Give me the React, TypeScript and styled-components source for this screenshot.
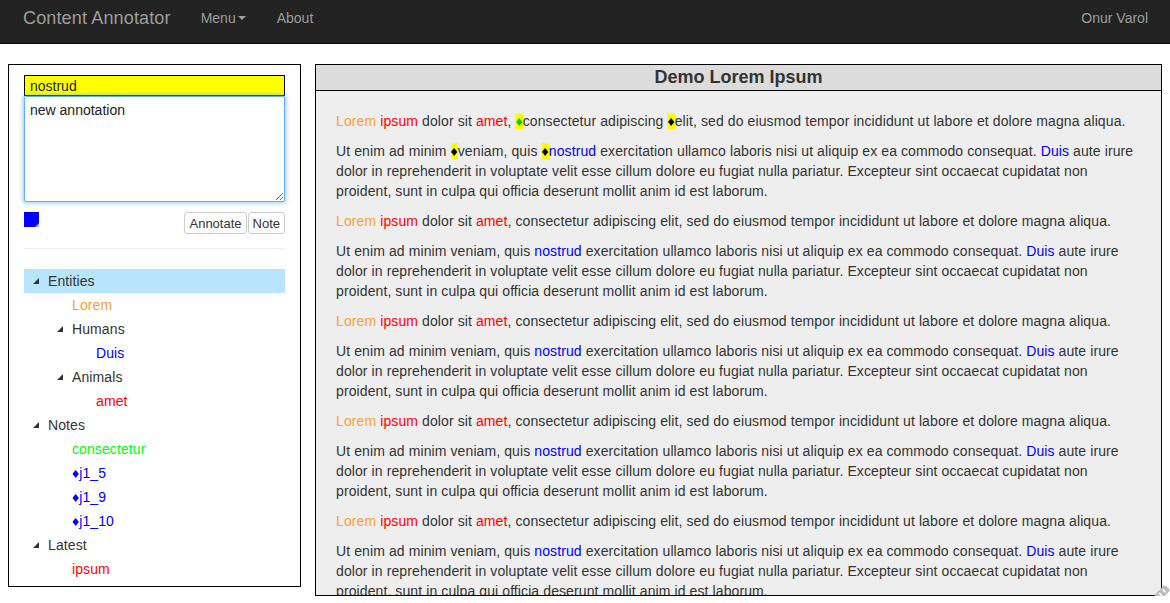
import React from 'react';
import styled, { createGlobalStyle } from 'styled-components';

const GlobalStyle = createGlobalStyle`
  body {
    margin: 0;
    font-family: 'Liberation Sans', Arial, sans-serif;
    font-size: 14px;
    line-height: 20px;
    color: #333;
    background: #fff;
  }
`;

const Navbar = styled.nav`
  height: 43px;
  box-sizing: content-box;
  background-color: #222;
  border-bottom: 1px solid #080808;
  display: flex;
  align-items: center;
  padding: 0 22px 0 23px;
  color: #9d9d9d;
`;

const NavInner = styled.div`
  display: flex;
  align-items: center;
  width: 100%;
  margin-top: -7px;
`;

const Brand = styled.div`
  font-size: 18px;
  margin-right: 30px;
  letter-spacing: 0.15px;
`;

const NavLink = styled.div<{ $last?: boolean }>`
  font-size: 14px;
  margin-right: ${(p) => (p.$last ? 0 : 31)}px;
  display: flex;
  align-items: center;
`;

const Caret = styled.span`
  display: inline-block;
  width: 0;
  height: 0;
  margin-left: 2px;
  border-top: 4px solid #9d9d9d;
  border-left: 4px solid transparent;
  border-right: 4px solid transparent;
`;

const Spacer = styled.div`
  flex: 1;
`;

const Main = styled.div`
  display: flex;
  align-items: flex-start;
  gap: 14px;
  padding: 20px 8px 0 8px;
`;

const SidePanel = styled.div`
  flex-shrink: 0;
  border: 1px solid #000;
  padding: 10px 15px 5px 15px;
  box-sizing: border-box;
  width: 293px;
`;

const TagInput = styled.div`
  height: 21px;
  border: 1px solid #000;
  background: #ff0;
  padding: 0 5px;
  line-height: 20px;
  box-sizing: border-box;
  font-size: 14px;
  color: #222;
`;

const NoteArea = styled.textarea`
  display: block;
  width: 100%;
  height: 106px;
  box-sizing: border-box;
  margin: 0;
  border: 1px solid #66afe9;
  box-shadow: 0 0 4px 1px rgba(102, 175, 233, 0.7);
  border-radius: 2px;
  outline: none;
  padding: 4px 5px;
  font-family: 'Liberation Sans', Arial, sans-serif;
  font-size: 14px;
  line-height: 18px;
  color: #222;
  resize: vertical;
`;

const ToolRow = styled.div`
  display: flex;
  align-items: flex-start;
  justify-content: space-between;
  margin-top: 10px;
`;

const Swatch = styled.div<{ color: string }>`
  position: relative;
  width: 15px;
  height: 15px;
  background: ${(p) => p.color};

  &::after {
    content: '';
    position: absolute;
    right: 0;
    bottom: 0;
    border-left: 4px solid transparent;
    border-bottom: 4px solid #aaa;
  }
`;

const ButtonGroup = styled.div`
  display: flex;
`;

const SmallButton = styled.button`
  height: 22px;
  padding: 0 4px;
  font-family: 'Liberation Sans', Arial, sans-serif;
  font-size: 13px;
  color: #333;
  background: #fff;
  border: 1px solid #ccc;
  border-radius: 3px;
  margin-left: 1px;
`;

const Divider = styled.hr`
  border: 0;
  border-top: 1px solid #eee;
  margin: 14px 0 20px 0;
`;

const TreeRow = styled.div<{ $depth: number; $selected?: boolean }>`
  display: flex;
  align-items: center;
  height: 24px;
  padding-left: ${(p) => p.$depth * 24}px;
  background: ${(p) => (p.$selected ? '#b7e5fb' : 'transparent')};
`;

const Toggle = styled.span`
  width: 24px;
  height: 24px;
  display: flex;
  align-items: center;
  justify-content: flex-start;
  padding-left: 9px;
  box-sizing: border-box;
`;

const NodeLabel = styled.span<{ color?: string }>`
  color: ${(p) => p.color || '#333'};
  letter-spacing: 0.1px;
`;

const ContentPanel = styled.div`
  position: relative;
  flex: 1;
  height: 532px;
  border: 1px solid #000;
  box-sizing: border-box;
  background: #eee;
  display: flex;
  flex-direction: column;
`;

const PanelHeader = styled.div`
  height: 26px;
  box-sizing: border-box;
  background: #dcdcdc;
  border-bottom: 1px solid #000;
  text-align: center;
  font-size: 18px;
  font-weight: bold;
  line-height: 25px;
  color: #333;
`;

const PanelBody = styled.div`
  flex: 1;
  overflow: hidden;
  padding: 20px 20px 0 20px;
  letter-spacing: 0.1px;
`;

const Para = styled.p`
  margin: 0 0 10px 0;
`;

const Mark = styled.span<{ color?: string }>`
  color: ${(p) => p.color || '#333'};
`;

const Pin = styled.span<{ color?: string }>`
  background: #ff0;
  color: ${(p) => p.color || '#000'};
`;

const Grip = styled.svg`
  position: absolute;
  right: -9px;
  bottom: -7px;
`;

type Node = { label: string; color?: string; selected?: boolean; children?: Node[] };

const ORANGE = '#f9a12e';

const tree: Node[] = [
  {
    label: 'Entities',
    selected: true,
    children: [
      { label: 'Lorem', color: ORANGE },
      { label: 'Humans', children: [{ label: 'Duis', color: '#00f' }] },
      { label: 'Animals', children: [{ label: 'amet', color: '#f00' }] },
    ],
  },
  {
    label: 'Notes',
    children: [
      { label: 'consectetur', color: '#0f0' },
      { label: '\u2666j1_5', color: '#00f' },
      { label: '\u2666j1_9', color: '#00f' },
      { label: '\u2666j1_10', color: '#00f' },
    ],
  },
  { label: 'Latest', children: [{ label: 'ipsum', color: '#f00' }] },
];

const Arrow = () => (
  <svg width="6" height="6" viewBox="0 0 6 6">
    <polygon points="0,6 6,6 6,0" fill="#333" />
  </svg>
);

const renderTree = (nodes: Node[], depth: number): React.ReactNode[] =>
  nodes.flatMap((n, i) => [
    <TreeRow key={`${depth}-${n.label}-${i}`} $depth={depth} $selected={n.selected}>
      <Toggle>{n.children ? <Arrow /> : null}</Toggle>
      <NodeLabel color={n.color}>{n.label}</NodeLabel>
    </TreeRow>,
    ...(n.children ? renderTree(n.children, depth + 1) : []),
  ]);

const LoremPara: React.FC<{ pins?: boolean }> = ({ pins }) => (
  <Para>
    <Mark color={ORANGE}>Lorem</Mark> <Mark color="#f00">ipsum</Mark> dolor sit{' '}
    <Mark color="#f00">amet</Mark>, {pins && <Pin color="#0c0">{'\u2666'}</Pin>}consectetur adipiscing{' '}
    {pins && <Pin>{'\u2666'}</Pin>}elit, sed do eiusmod tempor incididunt ut labore et dolore magna aliqua.
  </Para>
);

const UtPara: React.FC<{ pins?: boolean }> = ({ pins }) => (
  <Para>
    Ut enim ad minim {pins && <Pin>{'\u2666'}</Pin>}veniam, quis {pins && <Pin>{'\u2666'}</Pin>}
    <Mark color="#00f">nostrud</Mark> exercitation ullamco laboris nisi ut aliquip ex ea commodo consequat.{' '}
    <Mark color="#00f">Duis</Mark> aute irure dolor in reprehenderit in voluptate velit esse cillum dolore eu
    fugiat nulla pariatur. Excepteur sint occaecat cupidatat non proident, sunt in culpa qui officia deserunt
    mollit anim id est laborum.
  </Para>
);

const App: React.FC = () => (
  <>
    <GlobalStyle />
    <Navbar>
      <NavInner>
        <Brand>Content Annotator</Brand>
        <NavLink>
          Menu
          <Caret />
        </NavLink>
        <NavLink>About</NavLink>
        <Spacer />
        <NavLink $last>Onur Varol</NavLink>
      </NavInner>
    </Navbar>
    <Main>
      <SidePanel>
        <TagInput>nostrud</TagInput>
        <NoteArea defaultValue="new annotation" />
        <ToolRow>
          <Swatch color="#00f" />
          <ButtonGroup>
            <SmallButton>Annotate</SmallButton>
            <SmallButton>Note</SmallButton>
          </ButtonGroup>
        </ToolRow>
        <Divider />
        {renderTree(tree, 0)}
      </SidePanel>
      <ContentPanel>
        <PanelHeader>Demo Lorem Ipsum</PanelHeader>
        <PanelBody>
          <LoremPara pins />
          <UtPara pins />
          {[0, 1, 2, 3, 4].map((i) => (
            <React.Fragment key={i}>
              <LoremPara />
              <UtPara />
            </React.Fragment>
          ))}
        </PanelBody>
        <Grip width="16" height="18" viewBox="0 0 16 18">
          <g transform="rotate(45 8 9)">
            <rect x="4" y="1" width="8" height="16" rx="3" fill="#bdbdbd" />
            <line x1="6.5" y1="6" x2="9.5" y2="6" stroke="#fff" strokeWidth="1.5" strokeLinecap="round" />
            <line x1="6.5" y1="11" x2="9.5" y2="11" stroke="#fff" strokeWidth="1.5" strokeLinecap="round" />
          </g>
        </Grip>
      </ContentPanel>
    </Main>
  </>
);

export default App;
